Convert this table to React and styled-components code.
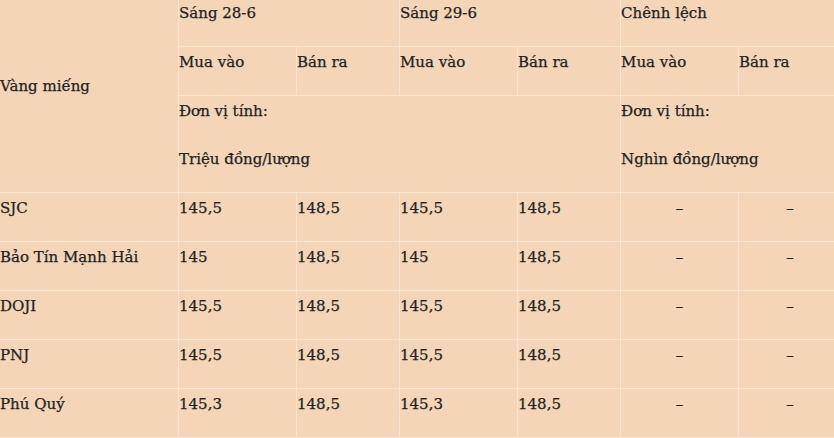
import React from 'react';
import styled, { createGlobalStyle } from 'styled-components';

const GlobalStyle = createGlobalStyle`
  html, body {
    margin: 0;
    padding: 0;
    background: #f4d5b8;
  }
  body {
    font-family: "DejaVu Serif", "Liberation Serif", serif;
    color: #222;
  }
`;

const Page = styled.div`
  width: 834px;
  height: 438px;
  overflow: hidden;
  background: #f4d5b8;
`;

const Table = styled.table`
  border-collapse: collapse;
  table-layout: fixed;
  width: 841px;
  margin: -3px 0 0 -1px;
  font-size: 15px;
  -webkit-text-stroke: 0.25px #222;
`;

const Cell = styled.td`
  border: 1px solid #f6e4d4;
  padding: 0;
  vertical-align: ${(p) => (p.$middle ? 'middle' : 'top')};
  text-align: ${(p) => (p.$center ? 'center' : 'left')};
  white-space: nowrap;
`;

const Text = styled.p`
  margin: 0 0 18px;
  line-height: 30px;
`;

const widths = [179, 118, 103, 118, 103, 118, 103];

const rows = [
  ['SJC', '145,5', '148,5', '145,5', '148,5'],
  ['Bảo Tín Mạnh Hải', '145', '148,5', '145', '148,5'],
  ['DOJI', '145,5', '148,5', '145,5', '148,5'],
  ['PNJ', '145,5', '148,5', '145,5', '148,5'],
  ['Phú Quý', '145,3', '148,5', '145,3', '148,5'],
];

export default function App() {
  return (
    <Page>
      <GlobalStyle />
      <Table>
        <colgroup>
          {widths.map((w, i) => (
            <col key={i} style={{ width: w }} />
          ))}
        </colgroup>
        <tbody>
          <tr>
            <Cell rowSpan={3} $middle>
              <Text>Vàng miếng</Text>
            </Cell>
            <Cell colSpan={2}><Text>Sáng 28-6</Text></Cell>
            <Cell colSpan={2}><Text>Sáng 29-6</Text></Cell>
            <Cell colSpan={2}><Text>Chênh lệch</Text></Cell>
          </tr>
          <tr>
            <Cell><Text>Mua vào</Text></Cell>
            <Cell><Text>Bán ra</Text></Cell>
            <Cell><Text>Mua vào</Text></Cell>
            <Cell><Text>Bán ra</Text></Cell>
            <Cell><Text>Mua vào</Text></Cell>
            <Cell><Text>Bán ra</Text></Cell>
          </tr>
          <tr>
            <Cell colSpan={4}>
              <Text>Đơn vị tính:</Text>
              <Text>Triệu đồng/lượng</Text>
            </Cell>
            <Cell colSpan={2}>
              <Text>Đơn vị tính:</Text>
              <Text>Nghìn đồng/lượng</Text>
            </Cell>
          </tr>
          {rows.map((r) => (
            <tr key={r[0]}>
              {r.map((v, i) => (
                <Cell key={i}><Text>{v}</Text></Cell>
              ))}
              <Cell $center><Text>–</Text></Cell>
              <Cell $center><Text>–</Text></Cell>
            </tr>
          ))}
        </tbody>
      </Table>
    </Page>
  );
}
